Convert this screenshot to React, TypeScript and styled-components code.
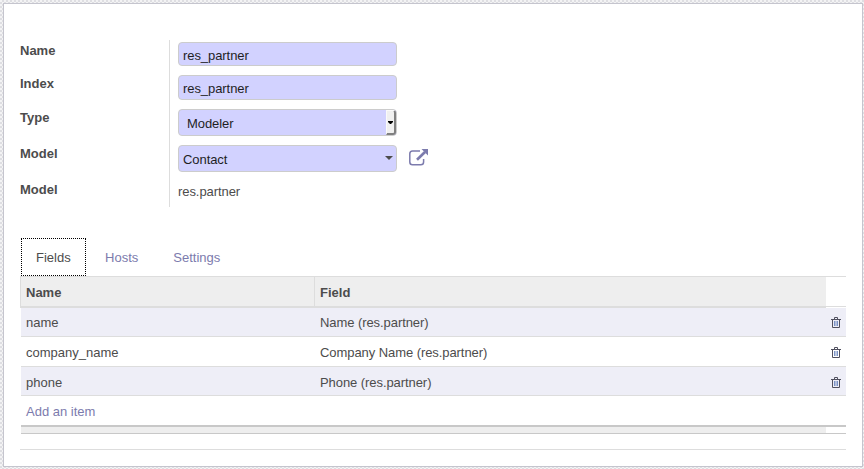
import React from "react";
import styled, { createGlobalStyle } from "styled-components";

const Global = createGlobalStyle`
  * { box-sizing: border-box; }
  body {
    margin: 0;
    overflow: hidden;
    font: 13px/18px "Liberation Sans", Arial, sans-serif;
    color: #4c4c4c;
    background: repeating-conic-gradient(#dedee2 0 25%, #f3f3f4 0 50%) 0 0 / 4px 4px;
  }
`;

const Sheet = styled.main`
  width: 860px;
  height: 464px;
  margin: 3px 0 0 3px;
  padding: 36px 16px 0;
  background: #fff;
  border: 1px solid #c5c5ce;
`;

const Group = styled.section`
  display: grid;
  grid-template-columns: 150px 1fr;
  height: 167px;
`;

const Labels = styled.div`
  display: grid;
  grid-template-rows: 33px 34px 36px 36px 26px;
  border-right: 1px solid #ddd;
  font-weight: bold;
  padding-top: 2px;
`;

const Label = styled.label`
  font-size: 13px;
`;

const Values = styled.div`
  display: flex;
  flex-direction: column;
  align-items: flex-start;
  gap: 9px;
  padding: 2px 0 0 8px;
  letter-spacing: -0.07px;
`;

const Control = styled.div<{ $h: number; $indent?: number }>`
  display: flex;
  align-items: center;
  justify-content: space-between;
  width: 219px;
  height: ${(p) => p.$h}px;
  padding: ${(p) => (p.$h === 24 ? 3 : 2)}px 0 0 ${(p) => p.$indent ?? 4}px;
  background: #d2d2ff;
  border: 1px solid #ccc;
  border-radius: 4px;
  color: #1f1f1f;
`;

const SelectButton = styled.span`
  display: flex;
  align-items: center;
  justify-content: center;
  width: 10px;
  height: 25px;
  margin-top: -2px;
  background: #f0f0f0;
  border: solid;
  border-width: 1px 2px 2px 1px;
  border-color: #fafafa #808080 #808080 #fafafa;
  border-radius: 0 3px 3px 0;
`;

const Caret = styled.svg`
  display: block;
  flex: none;
`;

const ComboCaret = styled(Caret)`
  margin: -4px 3px 0 0;
`;

const Line = styled.div`
  display: flex;
  align-items: center;
  gap: 12px;
`;

const OpenLink = styled.svg`
  margin-top: -3px;
`;

const ReadOnly = styled.span`
  padding-top: 2px;
`;

const Tabs = styled.nav`
  display: flex;
  height: 38px;
  margin-top: 31px;
`;

const Tab = styled.a<{ $active?: boolean }>`
  padding: ${(p) => (p.$active ? "10px 14.4px 10px 14px" : "11px 16px")};
  margin-left: ${(p) => (p.$active ? "1px" : "3px")};
  color: ${(p) => (p.$active ? "#4c4c4c" : "#7c7bad")};
  border: ${(p) => (p.$active ? "1px dotted #000" : "0")};
`;

const Table = styled.div`
  width: 826px;
  border-top: 1px solid #ddd;
`;

const Head = styled.div`
  display: grid;
  grid-template-columns: 295px 511px 20px;
  height: 31px;
  font-weight: bold;
`;

const HeadCell = styled.div<{ $first?: boolean }>`
  height: 31px;
  padding: 7px 5px 0;
  background: #eee;
  border: solid #ddd;
  border-width: 0 ${(p) => (p.$first ? "1px" : "0")} 2px ${(p) => (p.$first ? "1px" : "0")};
`;

const HeadSpacer = styled.div`
  height: 30px;
  border-bottom: 1px solid #ddd;
`;

const Row = styled.div<{ $tint?: boolean; $h: number; $top: number }>`
  display: grid;
  grid-template-columns: 294px 511px 20px;
  align-items: start;
  height: ${(p) => p.$h}px;
  margin-left: 1px;
  padding-top: ${(p) => p.$top}px;
  background: ${(p) => (p.$tint ? "#eeeef7" : "#fff")};
  border-bottom: 1px solid #ddd;
`;

const Cell = styled.span<{ $tight?: boolean }>`
  padding-left: 5px;
  letter-spacing: ${(p) => (p.$tight ? "-0.07px" : "0")};
`;

const Trash = styled.svg`
  margin: 3px 0 0 5px;
`;

const AddRow = styled.div`
  height: 31px;
  margin-left: 1px;
  padding: 7px 5px 0;
  border-bottom: 2px solid #c8c8c8;
  color: #7c7bad;
`;

const Footer = styled.div`
  height: 7px;
  margin-left: 1px;
  border-bottom: 1px solid #c8c8c8;
  background: linear-gradient(#eee, #eee) 0 0 / 805px 100% no-repeat;
`;

const Rule = styled.div`
  width: 826px;
  height: 16px;
  border-bottom: 1px solid #ddd;
`;

const rows = [
  { name: "name", field: "Name (res.partner)", h: 29, top: 6 },
  { name: "company_name", field: "Company Name (res.partner)", h: 30, top: 7 },
  { name: "phone", field: "Phone (res.partner)", h: 29, top: 7 },
];

const TrashIcon = () => (
  <Trash width="11" height="11" viewBox="0 0 11 11" fill="none" stroke="#50505f">
    <path d="M0 2.5h10M3.5 2V.5h3V2" />
    <path d="M1.5 3v7.5h7V3" />
    <path d="M3.5 4v5M5 4v5M6.5 4v5" stroke="#5b78b8" strokeWidth=".8" />
  </Trash>
);

const OpenIcon = () => (
  <OpenLink width="20" height="17" viewBox="0 0 20 17" fill="none">
    <path d="M11 2H3.5Q.8 2 .8 4.7v8.2q0 2.8 2.7 2.8h8.3q2.8 0 2.8-2.8V10" stroke="#7c7bad" strokeWidth="1.5" />
    <path d="M8 10.8 16 3" stroke="#7c7bad" strokeWidth="2.6" />
    <path d="M12.5 0H19v6.5z" fill="#7c7bad" />
  </OpenLink>
);

export default function App() {
  return (
    <>
      <Global />
      <Sheet>
        <Group>
          <Labels>
            {["Name", "Index", "Type", "Model", "Model"].map((t, i) => (
              <Label key={i}>{t}</Label>
            ))}
          </Labels>
          <Values>
            <Control $h={24}>res_partner</Control>
            <Control $h={25}>res_partner</Control>
            <Control $h={27} $indent={8}>
              Modeler
              <SelectButton>
                <Caret width="5" height="3" viewBox="0 0 5 3"><path d="M0 0h5v1L3 3H2L0 1z" fill="#000" /></Caret>
              </SelectButton>
            </Control>
            <Line>
              <Control $h={27}>
                Contact
                <ComboCaret width="8" height="4" viewBox="0 0 8 4"><path d="M0 0h8L4 4z" fill="#4c4c4c" /></ComboCaret>
              </Control>
              <OpenIcon />
            </Line>
            <ReadOnly>res.partner</ReadOnly>
          </Values>
        </Group>
        <Tabs>
          <Tab $active>Fields</Tab>
          <Tab>Hosts</Tab>
          <Tab>Settings</Tab>
        </Tabs>
        <Table>
          <Head>
            <HeadCell $first>Name</HeadCell>
            <HeadCell>Field</HeadCell>
            <HeadSpacer />
          </Head>
          {rows.map((r, i) => (
            <Row key={r.name} $tint={i % 2 === 0} $h={r.h} $top={r.top}>
              <Cell>{r.name}</Cell>
              <Cell $tight>{r.field}</Cell>
              <TrashIcon />
            </Row>
          ))}
          <AddRow>Add an item</AddRow>
          <Footer />
        </Table>
        <Rule />
      </Sheet>
    </>
  );
}
